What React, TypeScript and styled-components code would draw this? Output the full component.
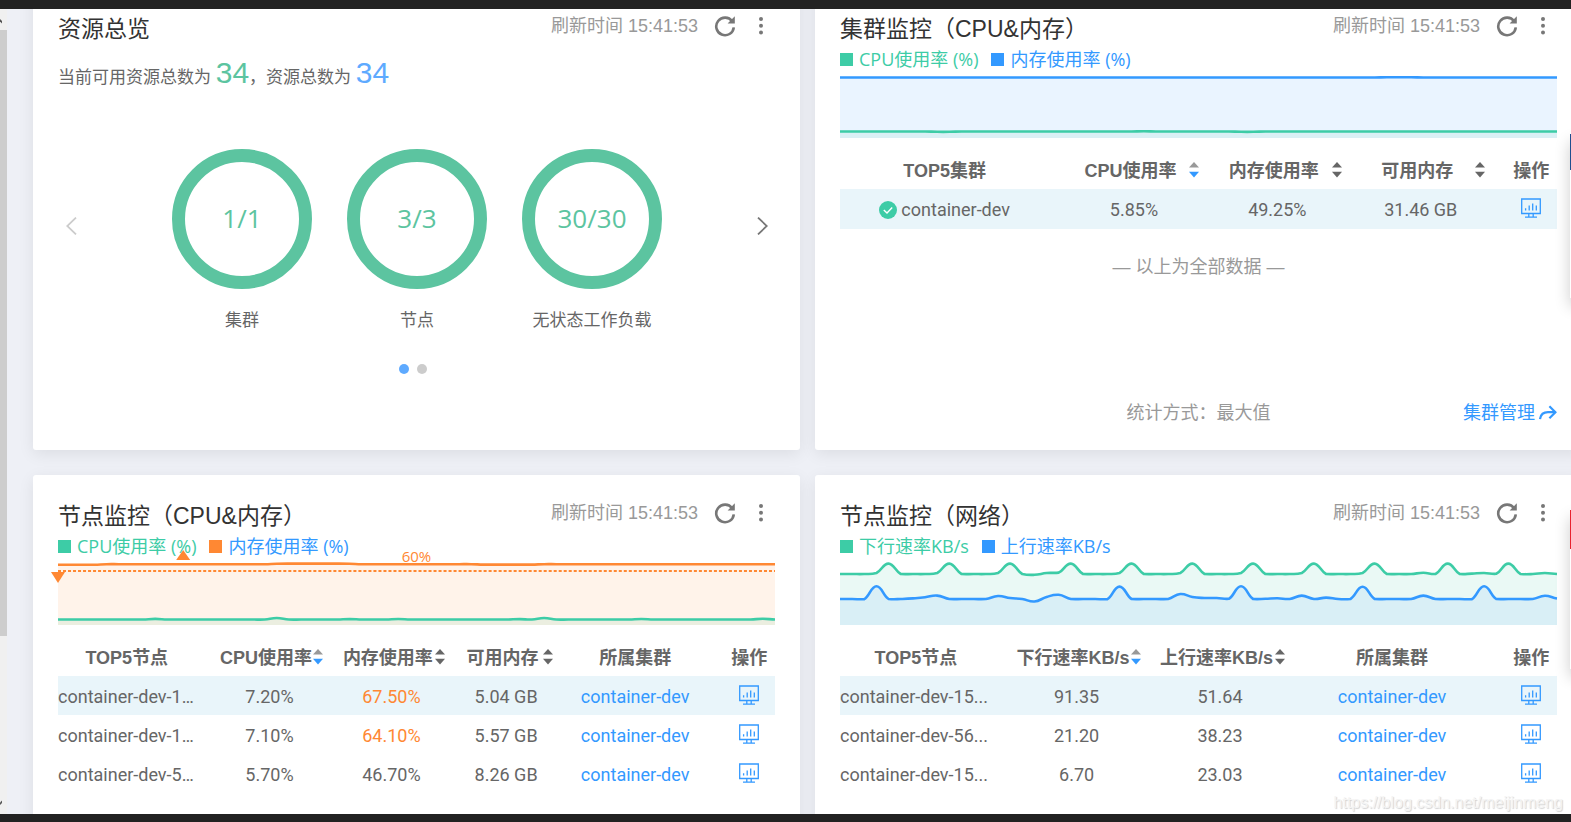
import React from "react";
import styled, { createGlobalStyle } from "styled-components";

const sans = '"Liberation Sans", "Noto Sans CJK SC", sans-serif';
const ui = '"Open Sans", "Noto Sans CJK SC", sans-serif';
const roboto = 'Roboto, "Noto Sans CJK SC", sans-serif';

const color = {
  title: "#333",
  text: "#666",
  muted: "#999",
  blue: "#3399ff",
  softBlue: "#5eaaff",
  teal: "#3dcca6",
  green: "#5cc4a0",
  orange: "#ff8833",
  frame: "#222",
  rowBg: "#e9f5fa",
};

const GlobalStyle = createGlobalStyle`
  * { box-sizing: border-box; }
  body { margin: 0; background: ${color.frame}; font-family: ${sans}; font-size: 18px; color: ${color.text}; }
  button { border: 0; padding: 0; background: none; font: inherit; color: inherit; cursor: pointer; }
  a { color: ${color.blue}; text-decoration: none; }
  svg { display: block; }
`;

const Page = styled.div`
  height: 100vh;
  padding: 9px 0 8px;
  background: ${color.frame};
`;

const Viewport = styled.main`
  position: relative;
  display: flex;
  height: 100%;
  overflow: hidden;
  background: #eef0f6;
`;

const ScrollTrack = styled.div`
  display: flex;
  flex-direction: column;
  flex: none;
  width: 7px;
  padding: 21px 0 178px;
  background: #f0f0f0;
`;

const ScrollThumb = styled.div`
  flex: 1;
  background: #cdcdcd;
`;

const ScrollArrow = styled.svg<{ $end?: boolean }>`
  position: absolute;
  left: 0;
  ${(p) => (p.$end ? "bottom: 9px; transform: scaleY(-1);" : "top: 10px;")}
`;

const Board = styled.div`
  display: grid;
  flex: 1;
  grid-template-columns: 1fr 1fr;
  grid-auto-rows: 462px;
  gap: 25px 15px;
  margin: -21px -11px 0 26px;
`;

const Card = styled.section`
  display: flex;
  flex-direction: column;
  min-width: 0;
  padding: 25px;
  border-radius: 3px;
  background: #fff;
  box-shadow: 0 4px 16px rgba(0, 0, 0, 0.08);
`;

const CardHeader = styled.header`
  display: flex;
  align-items: flex-start;
  height: 32px;
`;

const Title = styled.h2`
  flex: 1;
  margin: 0;
  font-size: 23px;
  font-weight: 400;
  line-height: 32px;
  color: ${color.title};
`;

const Refreshed = styled.span`
  line-height: 26px;
  color: ${color.muted};
`;

const HeaderButton = styled.button`
  display: flex;
  align-items: center;
  justify-content: center;
  width: 22px;
  height: 26px;
  margin-left: 16px;
  color: #777;

  & + & {
    width: 14px;
    margin: 0 7px 0 18px;
  }
`;

const Legend = styled.div`
  display: flex;
  gap: 13px;
  height: 28px;
  font-family: ${ui};
  line-height: 28px;
`;

const LegendItem = styled.span<{ $color: string; $mark: string }>`
  display: flex;
  align-items: center;
  gap: 6px;
  color: ${(p) => p.$color};

  &::before {
    content: "";
    width: 13px;
    height: 13px;
    background: ${(p) => p.$mark};
  }
`;

const ChartBox = styled.div`
  position: relative;
  height: 65px;

  svg {
    width: 100%;
    height: 65px;
    overflow: visible;
  }
`;

const Threshold = styled.span`
  position: absolute;
  left: 0;
  right: 0;
  bottom: 59px;
  font-family: ${ui};
  font-size: 15px;
  line-height: 20px;
  text-align: center;
  color: ${color.orange};
`;

const Table = styled.table`
  width: 100%;
  margin-top: 13px;
  border-collapse: collapse;
  table-layout: fixed;
`;

const HeadCell = styled.th<{ $width: number; $sortable?: boolean }>`
  width: ${(p) => p.$width}%;
  height: 38px;
  padding: ${(p) => (p.$sortable ? "0 7px 0 10px" : "0 0 3px")};
  font-weight: 700;
  white-space: nowrap;

  &:first-child { padding-right: 13px; }
  &:last-child { padding-left: 13px; }
`;

const SortButton = styled.button`
  display: flex;
  align-items: center;
  width: 100%;
  font-weight: 700;

  span {
    flex: 1;
    padding-bottom: 3px;
  }
`;

const Row = styled.tr<{ $height: number }>`
  height: ${(p) => p.$height}px;

  &:first-child { background: ${color.rowBg}; }
`;

const Cell = styled.td`
  padding: 2px 0 0;
  font-family: ${roboto};
  line-height: 24px;
  text-align: center;
  white-space: nowrap;

  &:first-child { padding-right: 13px; }
  &:last-child { padding: 0 0 2px 13px; }
`;

const Warning = styled.span`
  color: ${color.orange};
`;

const NodeName = styled.div`
  overflow: hidden;
  text-align: left;
  text-overflow: ellipsis;
`;

const ClusterName = styled.div`
  display: flex;
  align-items: center;
  justify-content: center;
  gap: 4px;
`;

const MonitorLink = styled.a`
  display: flex;
  justify-content: center;
`;

const EndNote = styled.p`
  margin: 25px 0 0;
  line-height: 26px;
  text-align: center;
  color: ${color.muted};
`;

const CardFooter = styled.footer`
  display: grid;
  grid-template-columns: 1fr auto 1fr;
  margin-top: auto;
  line-height: 24px;
  color: ${color.muted};
`;

const ManageLink = styled.a`
  display: flex;
  grid-column: 3;
  align-items: center;
  justify-self: end;
  gap: 4px;
`;

const Method = styled.span`
  grid-column: 2;
`;

const Summary = styled.p`
  margin: 7px 0 0;
  font-size: 17px;
  line-height: 42px;
`;

const Total = styled.strong<{ $color: string }>`
  font-size: 30px;
  font-weight: 400;
  color: ${(p) => p.$color};
`;

const Carousel = styled.div`
  display: flex;
  justify-content: space-between;
  margin: 50px 7px 0 8px;
`;

const CarouselArrow = styled.button<{ $disabled?: boolean }>`
  height: 154px;
  color: ${(p) => (p.$disabled ? "#ccc" : "#777")};
`;

const Rings = styled.div`
  display: flex;
  gap: 35px;
`;

const RingItem = styled.div`
  width: 140px;
  font-size: 17px;
  line-height: 24px;
  text-align: center;
`;

const Ring = styled.div`
  height: 140px;
  margin-bottom: 20px;
  border: 13px solid ${color.green};
  border-radius: 50%;
  font-family: ${ui};
  font-size: 26px;
  line-height: 112px;
  color: ${color.green};
`;

const Dots = styled.div`
  display: flex;
  justify-content: center;
  margin-top: 31px;
`;

const Dot = styled.button<{ $active?: boolean }>`
  width: 10px;
  height: 10px;
  margin-right: 8px;
  border-radius: 50%;
  background: ${(p) => (p.$active ? color.softBlue : "#ccc")};
`;

const SideTab = styled.div<{ $top: number; $height: number; $accent: string; $accentHeight: number }>`
  position: absolute;
  top: ${(p) => p.$top}px;
  right: -39px;
  width: 40px;
  height: ${(p) => p.$height}px;
  background: #fff;
  box-shadow: 0 8px 16px rgba(0, 0, 0, 0.2);

  &::before {
    content: "";
    display: block;
    height: ${(p) => p.$accentHeight}px;
    background: ${(p) => p.$accent};
  }
`;

const Watermark = styled.span`
  position: absolute;
  right: 8px;
  bottom: 1px;
  font-size: 16px;
  line-height: 20px;
  color: #f4f4f4;
  text-shadow: 1px 1px 1px rgba(0, 0, 0, 0.18);
`;

const RefreshIcon = () => (
  <svg width="22" height="22" viewBox="0 0 22 22" fill="none">
    <path d="M18.2 6.3A8.8 8.8 0 1 0 19.8 12.4" stroke="currentColor" strokeWidth="2.6" />
    <path d="M20.8 1.2V8.6H13.6Z" fill="currentColor" />
  </svg>
);

const MoreIcon = () => (
  <svg width="4" height="18" viewBox="0 0 4 18" fill="currentColor">
    <circle cx="2" cy="2" r="2" />
    <circle cx="2" cy="8.7" r="2" />
    <circle cx="2" cy="15.4" r="2" />
  </svg>
);

const ChevronIcon = ({ flip }: { flip?: boolean }) => (
  <svg width="11" height="18" viewBox="0 0 11 18" fill="none" stroke="currentColor" strokeWidth="1.8">
    <path d={flip ? "M1 .6 9.8 9 1 17.4" : "M10 .6 1.2 9 10 17.4"} />
  </svg>
);

const SortIcon = ({ active }: { active?: boolean }) => (
  <svg width="10" height="16" viewBox="0 0 10 16">
    <path d="M5 0 10 5.6H0Z" fill={active ? "#999" : color.text} />
    <path d="M0 9.8H10L5 15.4Z" fill={active ? color.blue : color.text} />
  </svg>
);

const MonitorIcon = () => (
  <svg width="20" height="20" viewBox="0 0 20 20" fill="none" stroke={color.blue}>
    <path d="M.7 1H19.3V15.5H.7Z" strokeWidth="1.3" />
    <path d="M4.6 10.2v2.2M8.2 7.4v5M11.7 5.6v6.8M15.3 7.4v5" strokeWidth="1.3" />
    <path d="M7.8 15.5v3.2M12.2 15.5v3.2M4 19.1H16" strokeWidth="1.3" />
  </svg>
);

const OkIcon = () => (
  <svg width="18" height="18" viewBox="0 0 18 18">
    <circle cx="9" cy="9" r="9" fill={color.teal} />
    <path d="M4.8 8.9 8 12 13.2 6.6" fill="none" stroke="#fff" strokeWidth="1.4" />
  </svg>
);

const ForwardIcon = () => (
  <svg width="18" height="16" viewBox="0 0 18 16" fill="none" stroke="currentColor" strokeWidth="2.2">
    <path d="M1 14.2C1.6 9.6 4.6 7.2 9 7.2H16.4" />
    <path d="M10.4 1.2 16.4 7.2 10.4 13.2" />
  </svg>
);

const CHART_WIDTH = 716;

/* Smooth line through evenly spaced samples, kept within each pair of neighbours. */
function linePath(values: number[]) {
  const step = CHART_WIDTH / (values.length - 1);
  const n = values.length;
  const slope = (i: number) => (values[Math.min(n - 1, i + 1)] - values[Math.max(0, i - 1)]) * 0.25;
  let d = `M0 ${values[0]}`;
  for (let i = 1; i < n; i++) {
    const lo = Math.min(values[i - 1], values[i]) - 0.4;
    const hi = Math.max(values[i - 1], values[i]) + 0.4;
    const clamp = (v: number) => Math.max(lo, Math.min(hi, v));
    const x0 = (i - 1) * step;
    const x1 = i * step;
    d += `C${(x0 + step * 0.45).toFixed(2)} ${clamp(values[i - 1] + slope(i - 1)).toFixed(2)} ${(x1 - step * 0.45).toFixed(2)} ${clamp(values[i] - slope(i)).toFixed(2)} ${x1.toFixed(2)} ${values[i]}`;
  }
  return d;
}

function series(base: number, changes: Record<number, number>) {
  return Array.from({ length: 60 }, (_, i) => changes[i] ?? base);
}

type Line = { values: number[]; stroke: string; fill: string };

const AreaChart = ({ lines, label, children }: { lines: Line[]; label: string; children?: React.ReactNode }) => (
  <svg viewBox={`0 0 ${CHART_WIDTH} 65`} preserveAspectRatio="none" role="img" aria-label={label}>
    {lines.map((l, i) => (
      <path key={i} d={`${linePath(l.values)}V65H0Z`} fill={l.fill} />
    ))}
    {lines.map((l, i) => (
      <path key={i} d={linePath(l.values)} fill="none" stroke={l.stroke} strokeWidth="2.6" />
    ))}
    {children}
  </svg>
);

const clusterLines: Line[] = [
  { values: series(4.5, { 45: 4.3, 46: 4.3, 47: 4.3 }), stroke: color.blue, fill: "#eaf4ff" },
  { values: series(58.5, { 8: 58.8, 9: 58.8, 25: 58.2, 33: 58.8, 34: 58.8 }), stroke: color.teal, fill: "#daf0f5" },
];

const nodeLines: Line[] = [
  {
    values: series(4.2, { 0: 4.7, 1: 4.7, 2: 4.7, 3: 4.7, 18: 3.8, 19: 3.6, 20: 3.6, 21: 3.6, 22: 3.6, 23: 3.6, 24: 3.8, 35: 4.6, 36: 4.6, 37: 4.6, 38: 4.6, 39: 4.6 }),
    stroke: color.orange,
    fill: "#fff3ea",
  },
  { values: series(59.5, { 8: 58.9, 18: 58, 24: 59.1, 28: 59, 38: 59.1, 40: 58, 48: 59, 58: 58.8 }), stroke: color.teal, fill: "#ebeee0" },
];

const networkLines: Line[] = [
  {
    values: series(14, {
      3: 13, 4: 3.6, 8: 13, 9: 3.6, 13: 13, 14: 3.6, 16: 14.8, 17: 13, 18: 12.6, 19: 3.6, 23: 13, 24: 3.6, 28: 13, 29: 3.6,
      33: 13, 34: 3.6, 38: 13, 39: 3.6, 43: 13, 44: 3.6, 48: 12.8, 50: 3.6, 52: 13.6, 53: 13, 54: 13.8, 55: 3.6, 58: 13,
    }),
    stroke: color.teal,
    fill: "#eaf9f5",
  },
  {
    values: series(39, {
      2: 39.2, 3: 26.3, 6: 38.4, 7: 37.2, 8: 35.6, 13: 36, 14: 38, 15: 39, 16: 41.5, 17: 37, 18: 34.8, 22: 39.2, 23: 26.6,
      28: 34, 29: 37, 30: 38, 31: 38, 32: 38.8, 33: 26.3, 35: 38.8, 36: 38.3, 38: 35.6, 40: 37.6, 43: 26.8,
      48: 35.6, 52: 39.2, 53: 26.3, 58: 35.8, 59: 38.5,
    }),
    stroke: color.blue,
    fill: "#d9eff6",
  },
];

const TopLine = ({ title }: { title: string }) => (
  <CardHeader>
    <Title>{title}</Title>
    <Refreshed>刷新时间 15:41:53</Refreshed>
    <HeaderButton aria-label="刷新"><RefreshIcon /></HeaderButton>
    <HeaderButton aria-label="更多"><MoreIcon /></HeaderButton>
  </CardHeader>
);

type Column = { label: string; width: number; sort?: "active" | "idle" };

const DataTable = ({ columns, rows, rowHeight = 39 }: { columns: Column[]; rows: React.ReactNode[][]; rowHeight?: number }) => (
  <Table>
    <thead>
      <tr>
        {columns.map((c) => (
          <HeadCell key={c.label} $width={c.width} $sortable={!!c.sort} scope="col">
            {c.sort ? (
              <SortButton>
                <span>{c.label}</span>
                <SortIcon active={c.sort === "active"} />
              </SortButton>
            ) : (
              c.label
            )}
          </HeadCell>
        ))}
      </tr>
    </thead>
    <tbody>
      {rows.map((cells, r) => (
        <Row key={r} $height={rowHeight}>
          {cells.map((cell, i) => (
            <Cell key={i}>{cell}</Cell>
          ))}
          <Cell>
            <MonitorLink href="#" aria-label="监控"><MonitorIcon /></MonitorLink>
          </Cell>
        </Row>
      ))}
    </tbody>
  </Table>
);

const clusterLink = <a href="#">container-dev</a>;

const rings = [
  { value: "1/1", label: "集群" },
  { value: "3/3", label: "节点" },
  { value: "30/30", label: "无状态工作负载" },
];

export default function App() {
  return (
    <Page>
      <GlobalStyle />
      <Viewport>
        <ScrollTrack><ScrollThumb /></ScrollTrack>
        <ScrollArrow width="3" height="5" viewBox="0 0 3 5"><path d="M0 0 2 2V4.5L0 2.5Z" fill="#555" /></ScrollArrow>
        <ScrollArrow $end width="3" height="5" viewBox="0 0 3 5"><path d="M0 0 2 2V4.5L0 2.5Z" fill="#555" /></ScrollArrow>
        <Board>
          <Card>
            <TopLine title="资源总览" />
            <Summary>
              当前可用资源总数为 <Total $color={color.green}>34</Total>，资源总数为 <Total $color={color.softBlue}>34</Total>
            </Summary>
            <Carousel>
              <CarouselArrow $disabled aria-label="上一页"><ChevronIcon /></CarouselArrow>
              <Rings>
                {rings.map((r) => (
                  <RingItem key={r.label}>
                    <Ring>{r.value}</Ring>
                    {r.label}
                  </RingItem>
                ))}
              </Rings>
              <CarouselArrow aria-label="下一页"><ChevronIcon flip /></CarouselArrow>
            </Carousel>
            <Dots>
              <Dot $active aria-label="第1页" />
              <Dot aria-label="第2页" />
            </Dots>
          </Card>

          <Card>
            <TopLine title="集群监控（CPU&内存）" />
            <Legend>
              <LegendItem $color={color.teal} $mark={color.teal}>CPU使用率 (%)</LegendItem>
              <LegendItem $color={color.blue} $mark={color.blue}>内存使用率 (%)</LegendItem>
            </Legend>
            <ChartBox>
              <AreaChart lines={clusterLines} label="集群CPU与内存使用率" />
            </ChartBox>
            <DataTable
              rowHeight={40}
              columns={[
                { label: "TOP5集群", width: 31 },
                { label: "CPU使用率", width: 20, sort: "active" },
                { label: "内存使用率", width: 20, sort: "idle" },
                { label: "可用内存", width: 20, sort: "idle" },
                { label: "操作", width: 9 },
              ]}
              rows={[[<ClusterName><OkIcon />container-dev</ClusterName>, "5.85%", "49.25%", "31.46 GB"]]}
            />
            <EndNote>— 以上为全部数据 —</EndNote>
            <CardFooter>
              <Method>统计方式：最大值</Method>
              <ManageLink href="#">集群管理<ForwardIcon /></ManageLink>
            </CardFooter>
          </Card>

          <Card>
            <TopLine title="节点监控（CPU&内存）" />
            <Legend>
              <LegendItem $color={color.teal} $mark={color.teal}>CPU使用率 (%)</LegendItem>
              <LegendItem $color={color.blue} $mark={color.orange}>内存使用率 (%)</LegendItem>
            </Legend>
            <ChartBox>
              <AreaChart lines={nodeLines} label="节点CPU与内存使用率">
                <path d="M0 11H716" stroke={color.orange} strokeWidth="1.8" strokeDasharray="3 2" />
                <path d="M118 0 125 -10 132 0Z" fill={color.orange} />
                <path d="M-7 12H7L0 23Z" fill={color.orange} />
              </AreaChart>
              <Threshold>60%</Threshold>
            </ChartBox>
            <DataTable
              columns={[
                { label: "TOP5节点", width: 21 },
                { label: "CPU使用率", width: 17, sort: "active" },
                { label: "内存使用率", width: 17, sort: "idle" },
                { label: "可用内存", width: 15, sort: "idle" },
                { label: "所属集群", width: 21 },
                { label: "操作", width: 9 },
              ]}
              rows={[
                [<NodeName>container-dev-1...</NodeName>, "7.20%", <Warning>67.50%</Warning>, "5.04 GB", clusterLink],
                [<NodeName>container-dev-1...</NodeName>, "7.10%", <Warning>64.10%</Warning>, "5.57 GB", clusterLink],
                [<NodeName>container-dev-5...</NodeName>, "5.70%", "46.70%", "8.26 GB", clusterLink],
              ]}
            />
          </Card>

          <Card>
            <TopLine title="节点监控（网络）" />
            <Legend>
              <LegendItem $color={color.teal} $mark={color.teal}>下行速率KB/s</LegendItem>
              <LegendItem $color={color.blue} $mark={color.blue}>上行速率KB/s</LegendItem>
            </Legend>
            <ChartBox>
              <AreaChart lines={networkLines} label="节点上下行速率" />
            </ChartBox>
            <DataTable
              columns={[
                { label: "TOP5节点", width: 23 },
                { label: "下行速率KB/s", width: 20, sort: "active" },
                { label: "上行速率KB/s", width: 20, sort: "idle" },
                { label: "所属集群", width: 28 },
                { label: "操作", width: 9 },
              ]}
              rows={[
                [<NodeName>container-dev-15...</NodeName>, "91.35", "51.64", clusterLink],
                [<NodeName>container-dev-56...</NodeName>, "21.20", "38.23", clusterLink],
                [<NodeName>container-dev-15...</NodeName>, "6.70", "23.03", clusterLink],
              ]}
            />
          </Card>
        </Board>
        <SideTab $top={125} $height={164} $accent="#1f4f8f" $accentHeight={36} />
        <SideTab $top={501} $height={159} $accent="#e8212f" $accentHeight={39} />
        <Watermark>https://blog.csdn.net/meijinmeng</Watermark>
      </Viewport>
    </Page>
  );
}
